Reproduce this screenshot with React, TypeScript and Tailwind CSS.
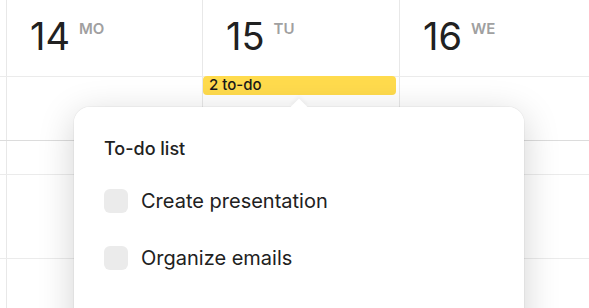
import React from "react";

const days = [
  { num: "14", label: "MO" },
  { num: "15", label: "TU" },
  { num: "16", label: "WE" },
];

const todos = ["Create presentation", "Organize emails"];

function Cells({ children }: { children?: (i: number) => React.ReactNode }) {
  return (
    <>
      <div className="w-[7px] shrink-0 border-r border-[#e8e8e8]" />
      <div className="w-[196px] shrink-0 border-r border-[#e8e8e8]">{children?.(0)}</div>
      <div className="w-[197px] shrink-0 border-r border-[#e8e8e8]">{children?.(1)}</div>
      <div className="flex-1">{children?.(2)}</div>
    </>
  );
}

export default function App() {
  return (
    <div className="relative w-[589px] h-[308px] overflow-hidden bg-white font-['Inter',sans-serif] text-[#212121]">
      <div className="flex h-full flex-col">
        {/* header */}
        <div className="flex h-[77px] shrink-0 border-b border-[#ebebeb]">
          <Cells>
            {(i) => (
              <div className="flex items-start pl-[23px] pt-[17px]">
                <span className="text-[38px] leading-none font-normal">{days[i].num}</span>
                <span className="ml-[9px] mt-[4px] text-[15px] leading-none font-semibold text-[#a0a0a0]">
                  {days[i].label}
                </span>
              </div>
            )}
          </Cells>
        </div>
        <div className="flex h-[64px] shrink-0 border-b border-[#dcdcdc]">
          <Cells>
            {(i) =>
              i === 1 ? (
                <div className="relative -mt-px mr-[3px] flex h-[19px] items-center rounded-[4px] bg-[#ffdb4d] pl-[6px] text-[15px] font-medium text-[#1a1a1a]">
                  2 to-do
                </div>
              ) : null
            }
          </Cells>
        </div>
        <div className="flex h-[34px] shrink-0 border-b border-[#ebebeb]">
          <Cells />
        </div>
        <div className="flex h-[84px] shrink-0 border-b border-[#ebebeb]">
          <Cells />
        </div>
        <div className="flex flex-1">
          <Cells />
        </div>
      </div>

      {/* popup */}
      <div className="absolute left-[74px] top-[107px] h-[240px] w-[450px] rounded-[16px] bg-white shadow-[0_8px_36px_rgba(0,0,0,0.18),0_0_0_1px_rgba(0,0,0,0.03)]">
        <div className="absolute left-1/2 top-[-6px] h-3 w-3 -translate-x-1/2 rotate-45 bg-white shadow-[-2px_-2px_4px_rgba(0,0,0,0.04)]" />
        <div className="relative rounded-[16px] bg-white px-[30px] pt-[30px]">
          <div className="text-[18px] leading-6 font-medium">To-do list</div>
          <div className="mt-[28px] flex flex-col gap-[33px]">
            {todos.map((t) => (
              <label key={t} className="flex items-center gap-[13px]">
                <span className="h-6 w-6 rounded-[6px] bg-[#ebebeb]" />
                <span className="text-[20px] leading-6">{t}</span>
              </label>
            ))}
          </div>
        </div>
      </div>
    </div>
  );
}
